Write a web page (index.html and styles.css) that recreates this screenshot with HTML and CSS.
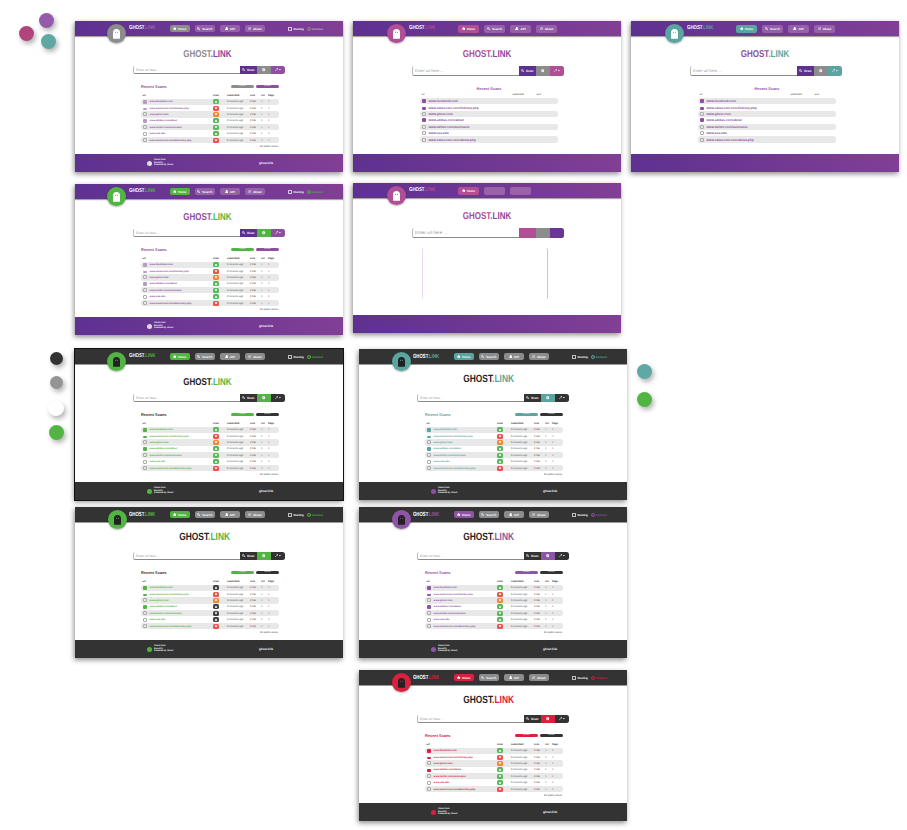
FILE: index.html
```html
<!DOCTYPE html>
<html lang="en">
<head>
<meta charset="utf-8">
<title>Ghost.Link themes</title>
<link rel="stylesheet" href="styles.css">
</head>
<body>
<svg class="defs" aria-hidden="true">
<symbol id="ghost" viewBox="0 0 14 20"><path fill-rule="evenodd" fill="currentColor" d="M0 7a7 7 0 0 1 14 0v13q-1.200-2.500-2.400-0q-1.200-2.500-2.300 0q-1.100-2.500-2.300 0q-1.200-2.500-2.300 0q-1.100-2.500-2.300 0q-1.200-2.500-2.400 0zM4 5.500v2.500h1.500v-2.500zM8.500 5.500v2.500h1.500v-2.500z"/></symbol>
<symbol id="home" viewBox="0 0 10 10"><path fill="currentColor" d="M5 0l5 5H8.500v5H6V7H4v3H1.500V5H0z"/></symbol>
<symbol id="find" viewBox="0 0 10 10"><path fill="none" stroke="currentColor" stroke-width="1.800" d="M6 4a2.500 2.500 0 1 1-5 0a2.500 2.500 0 1 1 5 0M5.500 5.500L9.500 9.500"/></symbol>
<symbol id="api" viewBox="0 0 10 10"><path fill="currentColor" d="M3 0h4v4h1.500L10 10H0l1.500-6H3z"/></symbol>
<symbol id="about" viewBox="0 0 10 10"><path fill="none" stroke="currentColor" stroke-width="1.200" d="M9 5a4 4 0 1 1-8 0a4 4 0 1 1 8 0M5 3v3M3 7l4-4"/></symbol>
<symbol id="gear" viewBox="0 0 10 10"><path fill="currentColor" fill-rule="evenodd" d="M4 0h2v2l1.500-1L9 2.500 8 4h2v2H8l1 1.500L7.500 9 6 8v2H4V8L2.500 9 1 7.500 2 6H0V4h2L1 2.500 2.500 1 4 2zM5 3.500a1.500 1.500 0 1 0 0 3a1.500 1.500 0 1 0 0-3z"/></symbol>
<symbol id="tool" viewBox="0 0 16 10"><path fill="currentColor" d="M7 0a3 3 0 0 1 .5 2.500a3 3 0 0 1-3 1.500L1.500 8.500L0 7l4-3a3 3 0 0 1 1-3zM11 3h5l-2.500 4z"/></symbol>
<symbol id="host" viewBox="0 0 10 10"><path fill="none" stroke="currentColor" stroke-width="2" d="M1 1h8v8H1z"/></symbol>
<symbol id="link" viewBox="0 0 10 10"><path fill="none" stroke="currentColor" stroke-width="2" d="M9 5a4 4 0 1 1-8 0a4 4 0 1 1 8 0M5 3v4"/></symbol>
</svg>

<main class="desk">
<i class="dot d1"></i><i class="dot d2"></i><i class="dot d3"></i><i class="dot d4"></i><i class="dot d5"></i><i class="dot d6"></i><i class="dot d7"></i><i class="dot d8"></i><i class="dot d9"></i>

<section class="win w1 t-gray full">
<div class="ava"><svg><use href="#ghost"/></svg></div>
<header class="bar"><div class="logo">GHOST<em>.LINK</em></div><nav class="nav"><a class="on"><svg><use href="#home"/></svg>Home</a><a><svg><use href="#find"/></svg>Search</a><a><svg><use href="#api"/></svg>API</a><a><svg><use href="#about"/></svg>About</a></nav><div class="side"><span><svg><use href="#host"/></svg>Hosting</span><span class="cn"><svg><use href="#link"/></svg>Connect</span></div></header>
<div class="body"><h1 class="title">GHOST<em>.LINK</em></h1>
<div class="search"><span class="input">Enter url here ...</span><a class="scan"><svg><use href="#find"/></svg>Scan</a><a class="mid"><svg><use href="#gear"/></svg></a><a class="tl"><svg><use href="#tool"/></svg></a></div>
<div class="recent"><h2>Recent Scans</h2><span class="p1">Recent</span><span class="p2">Recent</span></div>
<div class="tbl"><div class="th"><span>url</span><span>scan</span><span>submitted</span><span>size</span><span>rsc</span><span>flags</span></div>
<div class="r"><span class="u"><i class="fav a"></i>www.facebook.com</span><i class="bd ok"></i><span>5 minutes ago</span><span>2 KB</span><b>1</b><b>1</b></div>
<div class="r"><span class="u"><i class="fav l"></i>www.swisscom.com/link/any.php</span><i class="bd no"></i><span>5 minutes ago</span><span>2 KB</span><b>1</b><b>1</b></div>
<div class="r"><span class="u"><i class="fav o"></i>www.ghost.com</span><i class="bd wn"></i><span>5 minutes ago</span><span>2 KB</span><b>1</b><b>1</b></div>
<div class="r"><span class="u"><i class="fav a"></i>www.adidas.com/about</span><i class="bd ok"></i><span>5 minutes ago</span><span>2 KB</span><b>1</b><b>1</b></div>
<div class="r"><span class="u"><i class="fav o"></i>www.twitter.com/username</span><i class="bd ok"></i><span>5 minutes ago</span><span>2 KB</span><b>1</b><b>1</b></div>
<div class="r"><span class="u"><i class="fav o"></i>www.usa.edu</span><i class="bd ok"></i><span>5 minutes ago</span><span>2 KB</span><b>1</b><b>1</b></div>
<div class="r"><span class="u"><i class="fav o"></i>www.swisscom.com/about/any.php</span><i class="bd no"></i><span>5 minutes ago</span><span>2 KB</span><b>1</b><b>1</b></div>
</div><p class="more">30 public scans</p></div>
<footer class="foot"><div class="fl"><i class="fi"></i><p>Ghost.Link<br>Security<br>Powered by Ghost</p></div><div class="fr">ghost.link</div></footer>
</section>

<section class="win w2 t-pink lite wide">
<div class="ava"><svg><use href="#ghost"/></svg></div>
<header class="bar"><div class="logo">GHOST<em>.LINK</em></div><nav class="nav"><a class="on"><svg><use href="#home"/></svg>Home</a><a><svg><use href="#find"/></svg>Search</a><a><svg><use href="#api"/></svg>API</a><a><svg><use href="#about"/></svg>About</a></nav></header>
<div class="body"><h1 class="title">GHOST<em>.LINK</em></h1>
<div class="search"><span class="input">Enter url here ...</span><a class="scan"><svg><use href="#find"/></svg>Scan</a><a class="mid"><svg><use href="#gear"/></svg></a><a class="tl"><svg><use href="#tool"/></svg></a></div>
<div class="recent"><h2>Recent Scans</h2></div>
<div class="tbl"><div class="th"><span>url</span><span>submitted</span><span>size</span></div>
<div class="r"><span class="u"><i class="fav a"></i>www.facebook.com</span></div>
<div class="r"><span class="u"><i class="fav l"></i>www.swisscom.com/link/any.php</span></div>
<div class="r"><span class="u"><i class="fav o"></i>www.ghost.com</span></div>
<div class="r"><span class="u"><i class="fav a"></i>www.adidas.com/about</span></div>
<div class="r"><span class="u"><i class="fav o"></i>www.twitter.com/username</span></div>
<div class="r"><span class="u"><i class="fav o"></i>www.usa.edu</span></div>
<div class="r"><span class="u"><i class="fav o"></i>www.swisscom.com/about.php</span></div>
</div></div>
<footer class="foot"></footer>
</section>

<section class="win w3 t-teal lite wide">
<div class="ava"><svg><use href="#ghost"/></svg></div>
<header class="bar"><div class="logo">GHOST<em>.LINK</em></div><nav class="nav"><a class="on"><svg><use href="#home"/></svg>Home</a><a><svg><use href="#find"/></svg>Search</a><a><svg><use href="#api"/></svg>API</a><a><svg><use href="#about"/></svg>About</a></nav></header>
<div class="body"><h1 class="title">GHOST<em>.LINK</em></h1>
<div class="search"><span class="input">Enter url here ...</span><a class="scan"><svg><use href="#find"/></svg>Scan</a><a class="mid"><svg><use href="#gear"/></svg></a><a class="tl"><svg><use href="#tool"/></svg></a></div>
<div class="recent"><h2>Recent Scans</h2></div>
<div class="tbl"><div class="th"><span>url</span><span>submitted</span><span>size</span></div>
<div class="r"><span class="u"><i class="fav a"></i>www.facebook.com</span></div>
<div class="r"><span class="u"><i class="fav l"></i>www.swisscom.com/link/any.php</span></div>
<div class="r"><span class="u"><i class="fav o"></i>www.ghost.com</span></div>
<div class="r"><span class="u"><i class="fav a"></i>www.adidas.com/about</span></div>
<div class="r"><span class="u"><i class="fav o"></i>www.twitter.com/username</span></div>
<div class="r"><span class="u"><i class="fav o"></i>www.usa.edu</span></div>
<div class="r"><span class="u"><i class="fav o"></i>www.swisscom.com/about.php</span></div>
</div></div>
<footer class="foot"></footer>
</section>

<section class="win w4 t-green full">
<div class="ava"><svg><use href="#ghost"/></svg></div>
<header class="bar"><div class="logo">GHOST<em>.LINK</em></div><nav class="nav"><a class="on"><svg><use href="#home"/></svg>Home</a><a><svg><use href="#find"/></svg>Search</a><a><svg><use href="#api"/></svg>API</a><a><svg><use href="#about"/></svg>About</a></nav><div class="side"><span><svg><use href="#host"/></svg>Hosting</span><span class="cn"><svg><use href="#link"/></svg>Connect</span></div></header>
<div class="body"><h1 class="title">GHOST<em>.LINK</em></h1>
<div class="search"><span class="input">Enter url here ...</span><a class="scan"><svg><use href="#find"/></svg>Scan</a><a class="mid"><svg><use href="#gear"/></svg></a><a class="tl"><svg><use href="#tool"/></svg></a></div>
<div class="recent"><h2>Recent Scans</h2><span class="p1">Recent</span><span class="p2">Recent</span></div>
<div class="tbl"><div class="th"><span>url</span><span>scan</span><span>submitted</span><span>size</span><span>rsc</span><span>flags</span></div>
<div class="r"><span class="u"><i class="fav a"></i>www.facebook.com</span><i class="bd ok"></i><span>5 minutes ago</span><span>2 KB</span><b>1</b><b>1</b></div>
<div class="r"><span class="u"><i class="fav l"></i>www.swisscom.com/link/any.php</span><i class="bd no"></i><span>5 minutes ago</span><span>2 KB</span><b>1</b><b>1</b></div>
<div class="r"><span class="u"><i class="fav o"></i>www.ghost.com</span><i class="bd wn"></i><span>5 minutes ago</span><span>2 KB</span><b>1</b><b>1</b></div>
<div class="r"><span class="u"><i class="fav a"></i>www.adidas.com/about</span><i class="bd ok"></i><span>5 minutes ago</span><span>2 KB</span><b>1</b><b>1</b></div>
<div class="r"><span class="u"><i class="fav o"></i>www.twitter.com/username</span><i class="bd ok"></i><span>5 minutes ago</span><span>2 KB</span><b>1</b><b>1</b></div>
<div class="r"><span class="u"><i class="fav o"></i>www.usa.edu</span><i class="bd ok"></i><span>5 minutes ago</span><span>2 KB</span><b>1</b><b>1</b></div>
<div class="r"><span class="u"><i class="fav o"></i>www.swisscom.com/about/any.php</span><i class="bd no"></i><span>5 minutes ago</span><span>2 KB</span><b>1</b><b>1</b></div>
</div><p class="more">30 public scans</p></div>
<footer class="foot"><div class="fl"><i class="fi"></i><p>Ghost.Link<br>Security<br>Powered by Ghost</p></div><div class="fr">ghost.link</div></footer>
</section>

<section class="win w5 t-pink lite wide load">
<div class="ava"><svg><use href="#ghost"/></svg></div>
<header class="bar"><div class="logo">GHOST<em>.LINK</em></div><nav class="nav"><a class="on"><svg><use href="#home"/></svg>Home</a><a></a><a></a></nav></header>
<div class="body"><h1 class="title">GHOST<em>.LINK</em></h1>
<div class="search"><span class="input">Enter url here ...</span><a class="scan"></a><a class="mid"></a><a class="tl"></a></div>
<div class="panel"></div></div>
<footer class="foot"></footer>
</section>

<section class="win w6 t-dgreen dark full edged">
<div class="ava"><svg><use href="#ghost"/></svg></div>
<header class="bar"><div class="logo">GHOST<em>.LINK</em></div><nav class="nav"><a class="on"><svg><use href="#home"/></svg>Home</a><a><svg><use href="#find"/></svg>Search</a><a><svg><use href="#api"/></svg>API</a><a><svg><use href="#about"/></svg>About</a></nav><div class="side"><span><svg><use href="#host"/></svg>Hosting</span><span class="cn"><svg><use href="#link"/></svg>Connect</span></div></header>
<div class="body"><h1 class="title">GHOST<em>.LINK</em></h1>
<div class="search"><span class="input">Enter url here ...</span><a class="scan"><svg><use href="#find"/></svg>Scan</a><a class="mid"><svg><use href="#gear"/></svg></a><a class="tl"><svg><use href="#tool"/></svg></a></div>
<div class="recent"><h2>Recent Scans</h2><span class="p1">Recent</span><span class="p2">Recent</span></div>
<div class="tbl"><div class="th"><span>url</span><span>scan</span><span>submitted</span><span>size</span><span>rsc</span><span>flags</span></div>
<div class="r"><span class="u"><i class="fav a"></i>www.facebook.com</span><i class="bd ok"></i><span>5 minutes ago</span><span>2 KB</span><b>1</b><b>1</b></div>
<div class="r"><span class="u"><i class="fav l"></i>www.swisscom.com/link/any.php</span><i class="bd no"></i><span>5 minutes ago</span><span>2 KB</span><b>1</b><b>1</b></div>
<div class="r"><span class="u"><i class="fav o"></i>www.ghost.com</span><i class="bd wn"></i><span>5 minutes ago</span><span>2 KB</span><b>1</b><b>1</b></div>
<div class="r"><span class="u"><i class="fav a"></i>www.adidas.com/about</span><i class="bd ok"></i><span>5 minutes ago</span><span>2 KB</span><b>1</b><b>1</b></div>
<div class="r"><span class="u"><i class="fav o"></i>www.twitter.com/username</span><i class="bd ok"></i><span>5 minutes ago</span><span>2 KB</span><b>1</b><b>1</b></div>
<div class="r"><span class="u"><i class="fav o"></i>www.usa.edu</span><i class="bd ok"></i><span>5 minutes ago</span><span>2 KB</span><b>1</b><b>1</b></div>
<div class="r"><span class="u"><i class="fav o"></i>www.swisscom.com/about/any.php</span><i class="bd no"></i><span>5 minutes ago</span><span>2 KB</span><b>1</b><b>1</b></div>
</div><p class="more">30 public scans</p></div>
<footer class="foot"><div class="fl"><i class="fi"></i><p>Ghost.Link<br>Security<br>Powered by Ghost</p></div><div class="fr">ghost.link</div></footer>
</section>

<section class="win w7 t-dteal dark full tight">
<div class="ava"><svg><use href="#ghost"/></svg></div>
<header class="bar"><div class="logo">GHOST<em>.LINK</em></div><nav class="nav"><a class="on"><svg><use href="#home"/></svg>Home</a><a><svg><use href="#find"/></svg>Search</a><a><svg><use href="#api"/></svg>API</a><a><svg><use href="#about"/></svg>About</a></nav><div class="side"><span><svg><use href="#host"/></svg>Hosting</span><span class="cn"><svg><use href="#link"/></svg>Connect</span></div></header>
<div class="body"><h1 class="title">GHOST<em>.LINK</em></h1>
<div class="search"><span class="input">Enter url here ...</span><a class="scan"><svg><use href="#find"/></svg>Scan</a><a class="mid"><svg><use href="#gear"/></svg></a><a class="tl"><svg><use href="#tool"/></svg></a></div>
<div class="recent"><h2>Recent Scans</h2><span class="p1">Recent</span><span class="p2">Recent</span></div>
<div class="tbl"><div class="th"><span>url</span><span>scan</span><span>submitted</span><span>size</span><span>rsc</span><span>flags</span></div>
<div class="r"><span class="u"><i class="fav a"></i>www.facebook.com</span><i class="bd ok"></i><span>5 minutes ago</span><span>2 KB</span><b>1</b><b>1</b></div>
<div class="r"><span class="u"><i class="fav l"></i>www.swisscom.com/link/any.php</span><i class="bd no"></i><span>5 minutes ago</span><span>2 KB</span><b>1</b><b>1</b></div>
<div class="r"><span class="u"><i class="fav o"></i>www.ghost.com</span><i class="bd wn"></i><span>5 minutes ago</span><span>2 KB</span><b>1</b><b>1</b></div>
<div class="r"><span class="u"><i class="fav a"></i>www.adidas.com/about</span><i class="bd ok"></i><span>5 minutes ago</span><span>2 KB</span><b>1</b><b>1</b></div>
<div class="r"><span class="u"><i class="fav o"></i>www.twitter.com/username</span><i class="bd ok"></i><span>5 minutes ago</span><span>2 KB</span><b>1</b><b>1</b></div>
<div class="r"><span class="u"><i class="fav o"></i>www.usa.edu</span><i class="bd ok"></i><span>5 minutes ago</span><span>2 KB</span><b>1</b><b>1</b></div>
<div class="r"><span class="u"><i class="fav o"></i>www.swisscom.com/about/any.php</span><i class="bd no"></i><span>5 minutes ago</span><span>2 KB</span><b>1</b><b>1</b></div>
</div><p class="more">30 public scans</p></div>
<footer class="foot"><div class="fl"><i class="fi"></i><p>Ghost.Link<br>Security<br>Powered by Ghost</p></div><div class="fr">ghost.link</div></footer>
</section>

<section class="win w8 t-dgreen dark full tight mono">
<div class="ava"><svg><use href="#ghost"/></svg></div>
<header class="bar"><div class="logo">GHOST<em>.LINK</em></div><nav class="nav"><a class="on"><svg><use href="#home"/></svg>Home</a><a><svg><use href="#find"/></svg>Search</a><a><svg><use href="#api"/></svg>API</a><a><svg><use href="#about"/></svg>About</a></nav><div class="side"><span><svg><use href="#host"/></svg>Hosting</span><span class="cn"><svg><use href="#link"/></svg>Connect</span></div></header>
<div class="body"><h1 class="title">GHOST<em>.LINK</em></h1>
<div class="search"><span class="input">Enter url here ...</span><a class="scan"><svg><use href="#find"/></svg>Scan</a><a class="mid"><svg><use href="#gear"/></svg></a><a class="tl"><svg><use href="#tool"/></svg></a></div>
<div class="recent"><h2>Recent Scans</h2><span class="p1">Recent</span><span class="p2">Recent</span></div>
<div class="tbl"><div class="th"><span>url</span><span>scan</span><span>submitted</span><span>size</span><span>rsc</span><span>flags</span></div>
<div class="r"><span class="u"><i class="fav a"></i>www.facebook.com</span><i class="bd ok"></i><span>5 minutes ago</span><span>2 KB</span><b>1</b><b>1</b></div>
<div class="r"><span class="u"><i class="fav l"></i>www.swisscom.com/link/any.php</span><i class="bd no"></i><span>5 minutes ago</span><span>2 KB</span><b>1</b><b>1</b></div>
<div class="r"><span class="u"><i class="fav o"></i>www.ghost.com</span><i class="bd wn"></i><span>5 minutes ago</span><span>2 KB</span><b>1</b><b>1</b></div>
<div class="r"><span class="u"><i class="fav a"></i>www.adidas.com/about</span><i class="bd ok"></i><span>5 minutes ago</span><span>2 KB</span><b>1</b><b>1</b></div>
<div class="r"><span class="u"><i class="fav o"></i>www.twitter.com/username</span><i class="bd ok"></i><span>5 minutes ago</span><span>2 KB</span><b>1</b><b>1</b></div>
<div class="r"><span class="u"><i class="fav o"></i>www.usa.edu</span><i class="bd ok"></i><span>5 minutes ago</span><span>2 KB</span><b>1</b><b>1</b></div>
<div class="r"><span class="u"><i class="fav o"></i>www.swisscom.com/about/any.php</span><i class="bd no"></i><span>5 minutes ago</span><span>2 KB</span><b>1</b><b>1</b></div>
</div><p class="more">30 public scans</p></div>
<footer class="foot"><div class="fl"><i class="fi"></i><p>Ghost.Link<br>Security<br>Powered by Ghost</p></div><div class="fr">ghost.link</div></footer>
</section>

<section class="win w9 t-dpurple dark full tight">
<div class="ava"><svg><use href="#ghost"/></svg></div>
<header class="bar"><div class="logo">GHOST<em>.LINK</em></div><nav class="nav"><a class="on"><svg><use href="#home"/></svg>Home</a><a><svg><use href="#find"/></svg>Search</a><a><svg><use href="#api"/></svg>API</a><a><svg><use href="#about"/></svg>About</a></nav><div class="side"><span><svg><use href="#host"/></svg>Hosting</span><span class="cn"><svg><use href="#link"/></svg>Connect</span></div></header>
<div class="body"><h1 class="title">GHOST<em>.LINK</em></h1>
<div class="search"><span class="input">Enter url here ...</span><a class="scan"><svg><use href="#find"/></svg>Scan</a><a class="mid"><svg><use href="#gear"/></svg></a><a class="tl"><svg><use href="#tool"/></svg></a></div>
<div class="recent"><h2>Recent Scans</h2><span class="p1">Recent</span><span class="p2">Recent</span></div>
<div class="tbl"><div class="th"><span>url</span><span>scan</span><span>submitted</span><span>size</span><span>rsc</span><span>flags</span></div>
<div class="r"><span class="u"><i class="fav a"></i>www.facebook.com</span><i class="bd ok"></i><span>5 minutes ago</span><span>2 KB</span><b>1</b><b>1</b></div>
<div class="r"><span class="u"><i class="fav l"></i>www.swisscom.com/link/any.php</span><i class="bd no"></i><span>5 minutes ago</span><span>2 KB</span><b>1</b><b>1</b></div>
<div class="r"><span class="u"><i class="fav o"></i>www.ghost.com</span><i class="bd wn"></i><span>5 minutes ago</span><span>2 KB</span><b>1</b><b>1</b></div>
<div class="r"><span class="u"><i class="fav a"></i>www.adidas.com/about</span><i class="bd ok"></i><span>5 minutes ago</span><span>2 KB</span><b>1</b><b>1</b></div>
<div class="r"><span class="u"><i class="fav o"></i>www.twitter.com/username</span><i class="bd ok"></i><span>5 minutes ago</span><span>2 KB</span><b>1</b><b>1</b></div>
<div class="r"><span class="u"><i class="fav o"></i>www.usa.edu</span><i class="bd ok"></i><span>5 minutes ago</span><span>2 KB</span><b>1</b><b>1</b></div>
<div class="r"><span class="u"><i class="fav o"></i>www.swisscom.com/about/any.php</span><i class="bd no"></i><span>5 minutes ago</span><span>2 KB</span><b>1</b><b>1</b></div>
</div><p class="more">30 public scans</p></div>
<footer class="foot"><div class="fl"><i class="fi"></i><p>Ghost.Link<br>Security<br>Powered by Ghost</p></div><div class="fr">ghost.link</div></footer>
</section>

<section class="win w10 t-red dark full tight">
<div class="ava"><svg><use href="#ghost"/></svg></div>
<header class="bar"><div class="logo">GHOST<em>.LINK</em></div><nav class="nav"><a class="on"><svg><use href="#home"/></svg>Home</a><a><svg><use href="#find"/></svg>Search</a><a><svg><use href="#api"/></svg>API</a><a><svg><use href="#about"/></svg>About</a></nav><div class="side"><span><svg><use href="#host"/></svg>Hosting</span><span class="cn"><svg><use href="#link"/></svg>Connect</span></div></header>
<div class="body"><h1 class="title">GHOST<em>.LINK</em></h1>
<div class="search"><span class="input">Enter url here ...</span><a class="scan"><svg><use href="#find"/></svg>Scan</a><a class="mid"><svg><use href="#gear"/></svg></a><a class="tl"><svg><use href="#tool"/></svg></a></div>
<div class="recent"><h2>Recent Scans</h2><span class="p1">Recent</span><span class="p2">Recent</span></div>
<div class="tbl"><div class="th"><span>url</span><span>scan</span><span>submitted</span><span>size</span><span>rsc</span><span>flags</span></div>
<div class="r"><span class="u"><i class="fav a"></i>www.facebook.com</span><i class="bd ok"></i><span>5 minutes ago</span><span>2 KB</span><b>1</b><b>1</b></div>
<div class="r"><span class="u"><i class="fav l"></i>www.swisscom.com/link/any.php</span><i class="bd no"></i><span>5 minutes ago</span><span>2 KB</span><b>1</b><b>1</b></div>
<div class="r"><span class="u"><i class="fav o"></i>www.ghost.com</span><i class="bd wn"></i><span>5 minutes ago</span><span>2 KB</span><b>1</b><b>1</b></div>
<div class="r"><span class="u"><i class="fav l"></i>www.adidas.com/about</span><i class="bd ok"></i><span>5 minutes ago</span><span>2 KB</span><b>1</b><b>1</b></div>
<div class="r"><span class="u"><i class="fav o"></i>www.twitter.com/username</span><i class="bd ok"></i><span>5 minutes ago</span><span>2 KB</span><b>1</b><b>1</b></div>
<div class="r"><span class="u"><i class="fav o"></i>www.usa.edu</span><i class="bd ok"></i><span>5 minutes ago</span><span>2 KB</span><b>1</b><b>1</b></div>
<div class="r"><span class="u"><i class="fav o"></i>www.swisscom.com/about/any.php</span><i class="bd no"></i><span>5 minutes ago</span><span>2 KB</span><b>1</b><b>1</b></div>
</div><p class="more">30 public scans</p></div>
<footer class="foot"><div class="fl"><i class="fi"></i><p>Ghost.Link<br>Security<br>Powered by Ghost</p></div><div class="fr">ghost.link</div></footer>
</section>
</main>
</body>
</html>
```

FILE: styles.css
```css
* { box-sizing: border-box; margin: 0; padding: 0; }
html, body { background: #fff; }
body { font-family: "Liberation Sans", Arial, sans-serif; overflow: hidden; text-rendering: geometricPrecision; }
.defs { position: absolute; width: 0; height: 0; }
.desk { position: relative; width: 907px; height: 830px; overflow: hidden; }

/* palette dots on the canvas */
.dot { position: absolute; border-radius: 50%; box-shadow: 2px 3px 5px rgba(0,0,0,.3); }
.d1 { left: 39px; top: 13px; width: 15px; height: 15px; background: #955ba8; }
.d2 { left: 19px; top: 26px; width: 15px; height: 15px; background: #b0457e; }
.d3 { left: 41px; top: 34px; width: 15px; height: 15px; background: #5fa8a3; }
.d4 { left: 50px; top: 352px; width: 13px; height: 13px; background: #333; }
.d5 { left: 50px; top: 376px; width: 13px; height: 13px; background: #949494; }
.d6 { left: 48px; top: 401px; width: 16px; height: 15px; background: #fff; }
.d7 { left: 49px; top: 425px; width: 15px; height: 15px; background: #52b543; }
.d8 { left: 637px; top: 364px; width: 15px; height: 15px; background: #5fa8a3; }
.d9 { left: 637px; top: 392px; width: 15px; height: 15px; background: #52b543; }

/* windows */
.win { position: absolute; width: 268px; height: 151px; display: flex; flex-direction: column; background: #fff; box-shadow: -1px 2px 5px rgba(0,0,0,.45); color: #555; }
.w1 { left: 75px; top: 21px; }
.w2 { left: 353px; top: 21px; }
.w3 { left: 631px; top: 21px; }
.w4 { left: 75px; top: 184px; }
.w5 { left: 353px; top: 183px; height: 150px; }
.w6 { left: 75px; top: 349px; }
.w7 { left: 359px; top: 349px; }
.w8 { left: 75px; top: 507px; }
.w9 { left: 359px; top: 507px; }
.w10 { left: 359px; top: 670px; }
.edged { outline: 1px solid #111; }

/* themes */
.win { --grad: linear-gradient(90deg, #5e3191, #813f95); --other: #9560a8; --scan: #5e3191; --mid: #8c8c8c; --purple: #8e4fa0; }
.dark { --grad: linear-gradient(#333, #333); --other: #8c8c8c; --scan: #333; --tool: #333; --p2: #333; --t1: #222; --logo: #fff; }
.t-gray { --accent: #8c8c8c; --lk: #9a6ab0; --t1: #8c8c8c; --t2: #8a45a0; --tool: #8e4fa0; --p1: #8c8c8c; --p2: #8e4fa0; --ink: #8e4fa0; --fi: #ddd; }
.t-pink { --accent: #b04e96; --lk: #b04e96; --t1: #b04e96; --t2: #8a45a0; --tool: #b04e96; --ink: #8e4fa0; }
.t-teal { --accent: #5aa5a0; --lk: #5aa5a0; --t1: #8e4fa0; --t2: #5aa5a0; --tool: #5aa5a0; --ink: #8e4fa0; }
.t-green { --accent: #52b543; --lk: #52b543; --t1: #8e4fa0; --t2: #52b543; --mid: #52b543; --tool: #8e4fa0; --p1: #52b543; --p2: #8e4fa0; --ink: #8e4fa0; --fi: #ddd; }
.t-dgreen { --accent: #52b543; --lk: #52b543; --t2: #52b543; --mid: #52b543; --p1: #52b543; --ink: #52b543; --head: #333; --fi: #52b543; }
.t-dteal { --accent: #5aa5a0; --lk: #5aa5a0; --t2: #5aa5a0; --mid: #5aa5a0; --p1: #5aa5a0; --ink: #5aa5a0; --fi: #8e4fa0; }
.t-dpurple { --accent: #8e55a6; --lk: #8e55a6; --t2: #8e55a6; --mid: #8e55a6; --p1: #8e55a6; --ink: #8e55a6; --fi: #8e55a6; }
.t-red { --accent: #d9203f; --lk: #d9203f; --t2: #d9203f; --mid: #d9203f; --p1: #d9203f; --ink: #d9203f; --fi: #d9203f; }

/* header */
.ava { position: absolute; left: 32px; top: 3px; width: 19px; height: 19px; border-radius: 50%; background: var(--accent); display: flex; align-items: center; justify-content: center; color: #fff; box-shadow: 0 1px 2px rgba(0,0,0,.3); z-index: 2; }
.ava svg { width: 7px; height: 10px; }
.dark .ava { color: #222; }
.bar { flex: 0 0 15px; display: flex; align-items: center; padding: 0 20px 0 54px; background: var(--grad); box-shadow: 0 1px 1px rgba(0,0,0,.35); font-weight: 700; color: #fff; }
.logo { width: 41px; font: 700 5.600px/1 "Liberation Sans", sans-serif; white-space: nowrap; transform: scaleX(.78); transform-origin: left center; }
.logo em { font-style: normal; color: var(--lk); }
.nav { display: flex; gap: 5.500px; }
.nav a { width: 19.500px; height: 7px; display: flex; align-items: center; justify-content: center; gap: 1.500px; border-radius: 2px; background: var(--other); font-size: 3px; }
.nav a.on { background: var(--accent); }
.nav svg { width: 3.500px; height: 3.500px; }
.side { margin-left: auto; display: flex; gap: 3px; font-size: 2.800px; }
.side span { display: flex; align-items: center; gap: 1px; }
.side svg { width: 4px; height: 4px; }
.side .cn { color: var(--accent); }
.side .cn svg { color: var(--accent); }
.t-gray .side .cn { color: #c9b6d3; }

/* body */
.body { flex: 1; padding-top: 14px; min-height: 0; }
.title { font: 700 10px/10px "Liberation Sans", sans-serif; text-align: center; padding-right: 4px; color: var(--t1); transform: scaleX(.8); }
.title em { font-style: normal; color: var(--t2); }
.search { display: flex; width: 152px; height: 8px; margin: 6px 0 0 58px; color: #fff; font-size: 3.200px; font-weight: 700; }
.input { flex: 1; display: flex; align-items: center; padding-left: 2px; border-left: 1px solid #bbb; border-bottom: 1px solid #8a8a8a; border-radius: 2px 0 0 2px; color: #999; font-weight: 400; font-size: 3.300px; }
.search a { flex: 0 0 14px; display: flex; align-items: center; justify-content: center; gap: 1px; }
.search svg { width: 3.500px; height: 3.500px; }
.search .scan { flex-basis: 17px; background: var(--scan); }
.search .mid { background: var(--mid); }
.search .tl { background: var(--tool); border-radius: 0 2.500px 2.500px 0; }
.search .tl svg { width: 6px; }

.recent { display: flex; align-items: center; gap: 2px; width: 138px; height: 4px; margin: 10px 0 0 66px; color: #fff; }
.recent h2 { flex: 1; font-size: 3.900px; font-weight: 700; color: var(--head, var(--ink)); }
.recent span { width: 23px; height: 3px; border-radius: 1.500px; font-size: 2px; line-height: 3px; text-align: center; }
.p1 { background: var(--p1); }
.p2 { background: var(--p2); }

.tbl { width: 138px; margin: 4px 0 0 66px; font-size: 2.600px; color: #555; }
.th, .r { display: grid; grid-template-columns: 70.500px 14px 23px 11px 7px 11px; align-items: center; padding-left: 1.500px; }
.th { height: 6.500px; font-weight: 700; color: #333; }
.r { height: 6.400px; border-radius: 2.500px; }
.r:nth-child(even) { background: #e8e8e8; }
.u { display: flex; align-items: center; gap: 3px; margin-right: -1.500px; font-size: 2.500px; font-weight: 700; color: var(--ink); white-space: nowrap; }
.r b { font-weight: 700; color: #a583b5; }
.fav { flex: none; width: 4px; height: 4px; display: block; border-radius: 1px; }
.fav.a { background: var(--fav, var(--ink)); }
.fav.l { background: var(--fav, var(--ink)); height: 2.500px; margin-top: 1.500px; }
.fav.o { border: 1px solid #aaa; }
.t-gray .fav, .t-green .fav { --fav: #b79bc4; }
.bd { display: block; width: 6px; height: 5px; border-radius: 1.500px; position: relative; }
.bd::after { content: ""; position: absolute; left: 2px; top: 1.500px; width: 2px; height: 2px; background: #fff; border-radius: 50%; }
.ok { background: #5cb85c; }
.no { background: #ef5350; }
.wn { background: #f08a35; }
.mono .ok { background: #444; }
.more { margin: 1.500px 3px 0 0; padding-right: 62px; text-align: right; font-size: 2.600px; color: #444; }

/* footer */
.foot { flex: 0 0 18px; display: flex; align-items: center; padding-left: 72px; background: var(--grad); color: #fff; }
.fl { width: 112px; display: flex; align-items: center; gap: 2px; font-size: 2.200px; line-height: 2.400px; font-weight: 700; }
.fi { width: 5px; height: 5px; border-radius: 50%; background: var(--fi); }
.fr { font-size: 3px; font-weight: 700; }

/* variants */
.wide .ava { left: 34px; }
.wide .bar { padding-left: 56px; }
.wide .logo { width: 49px; }
.wide .nav { gap: 5px; }
.wide .nav a { width: 21px; height: 8px; font-size: 3px; }
.wide .search { height: 9.500px; margin-left: 59px; }
.wide .input { font-size: 4px; }
.wide .title { padding-right: 0; }
.lite .recent { display: block; height: auto; margin: 11px 0 0 67px; text-align: center; }
.lite .recent h2 { font-size: 3.800px; }
.lite .tbl { margin: 1px 0 0 67px; }
.lite .th, .lite .r { grid-template-columns: 91px 24px 23px; }
.lite .u { font-size: 3.200px; }
.lite .th { height: 6.500px; font-weight: 400; }
.tight .body { padding-top: 10px; }
.tight .title { font-size: 10.500px; padding-right: 11px; }
.tight .search { margin-top: 10px; }
.tight .ava { left: 33px; }
.tight .logo { font-size: 6px; transform: scaleX(.72); }
.dark .bar { box-shadow: 0 1px 0 #999; }
.load .nav a:not(.on) { background: #9a62a8; }
.load .input { font-size: 4.500px; }
.load .search .scan { background: #b04e96; }
.load .search .mid { background: #8c8c8c; }
.load .search .tl { background: #6a3596; }
.panel { width: 126px; height: 51px; margin: 10px 0 0 69px; border-radius: 2px; border-left: 1px solid #e8dcec; border-right: 1px solid #d3bedb; }
```
